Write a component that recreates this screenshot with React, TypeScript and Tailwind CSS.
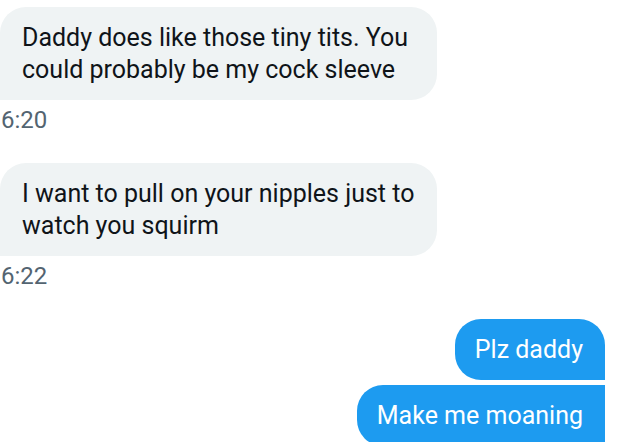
export default function App() {
  return (
    <div className="h-[442px] w-[625px] overflow-hidden bg-white font-['Roboto',sans-serif]">
      <div className="flex flex-col pt-[7px]">
        <div className="w-[437px] rounded-[26px] rounded-bl-none bg-[#eff3f4] pt-[15px] pb-[14px] pl-[22px] text-[25px] leading-[32px] text-[#0f1419]">
          <div>Daddy does like those tiny tits. You</div>
          <div>could probably be my cock sleeve</div>
        </div>
        <div className="mt-[5px] pl-[1px] text-[24px] leading-[30px] text-[#536471]">6:20</div>

        <div className="mt-[28px] w-[437px] rounded-[26px] rounded-bl-none bg-[#eff3f4] pt-[15px] pb-[14px] pl-[22px] text-[25px] leading-[32px] text-[#0f1419]">
          <div>I want to pull on your nipples just to</div>
          <div>watch you squirm</div>
        </div>
        <div className="mt-[5px] pl-[1px] text-[24px] leading-[30px] text-[#536471]">6:22</div>

        <div className="mt-[28px] flex flex-col items-end gap-[5px] pr-[20px]">
          <div className="flex h-[61px] items-center rounded-[26px] rounded-br-none bg-[#1d9bf0] pl-[20px] pr-[22px] text-[25px] text-white">
            Plz daddy
          </div>
          <div className="flex h-[61px] items-center rounded-[26px] rounded-r-none bg-[#1d9bf0] pl-[20px] pr-[22px] text-[25px] text-white">
            Make me moaning
          </div>
        </div>
      </div>
    </div>
  )
}
